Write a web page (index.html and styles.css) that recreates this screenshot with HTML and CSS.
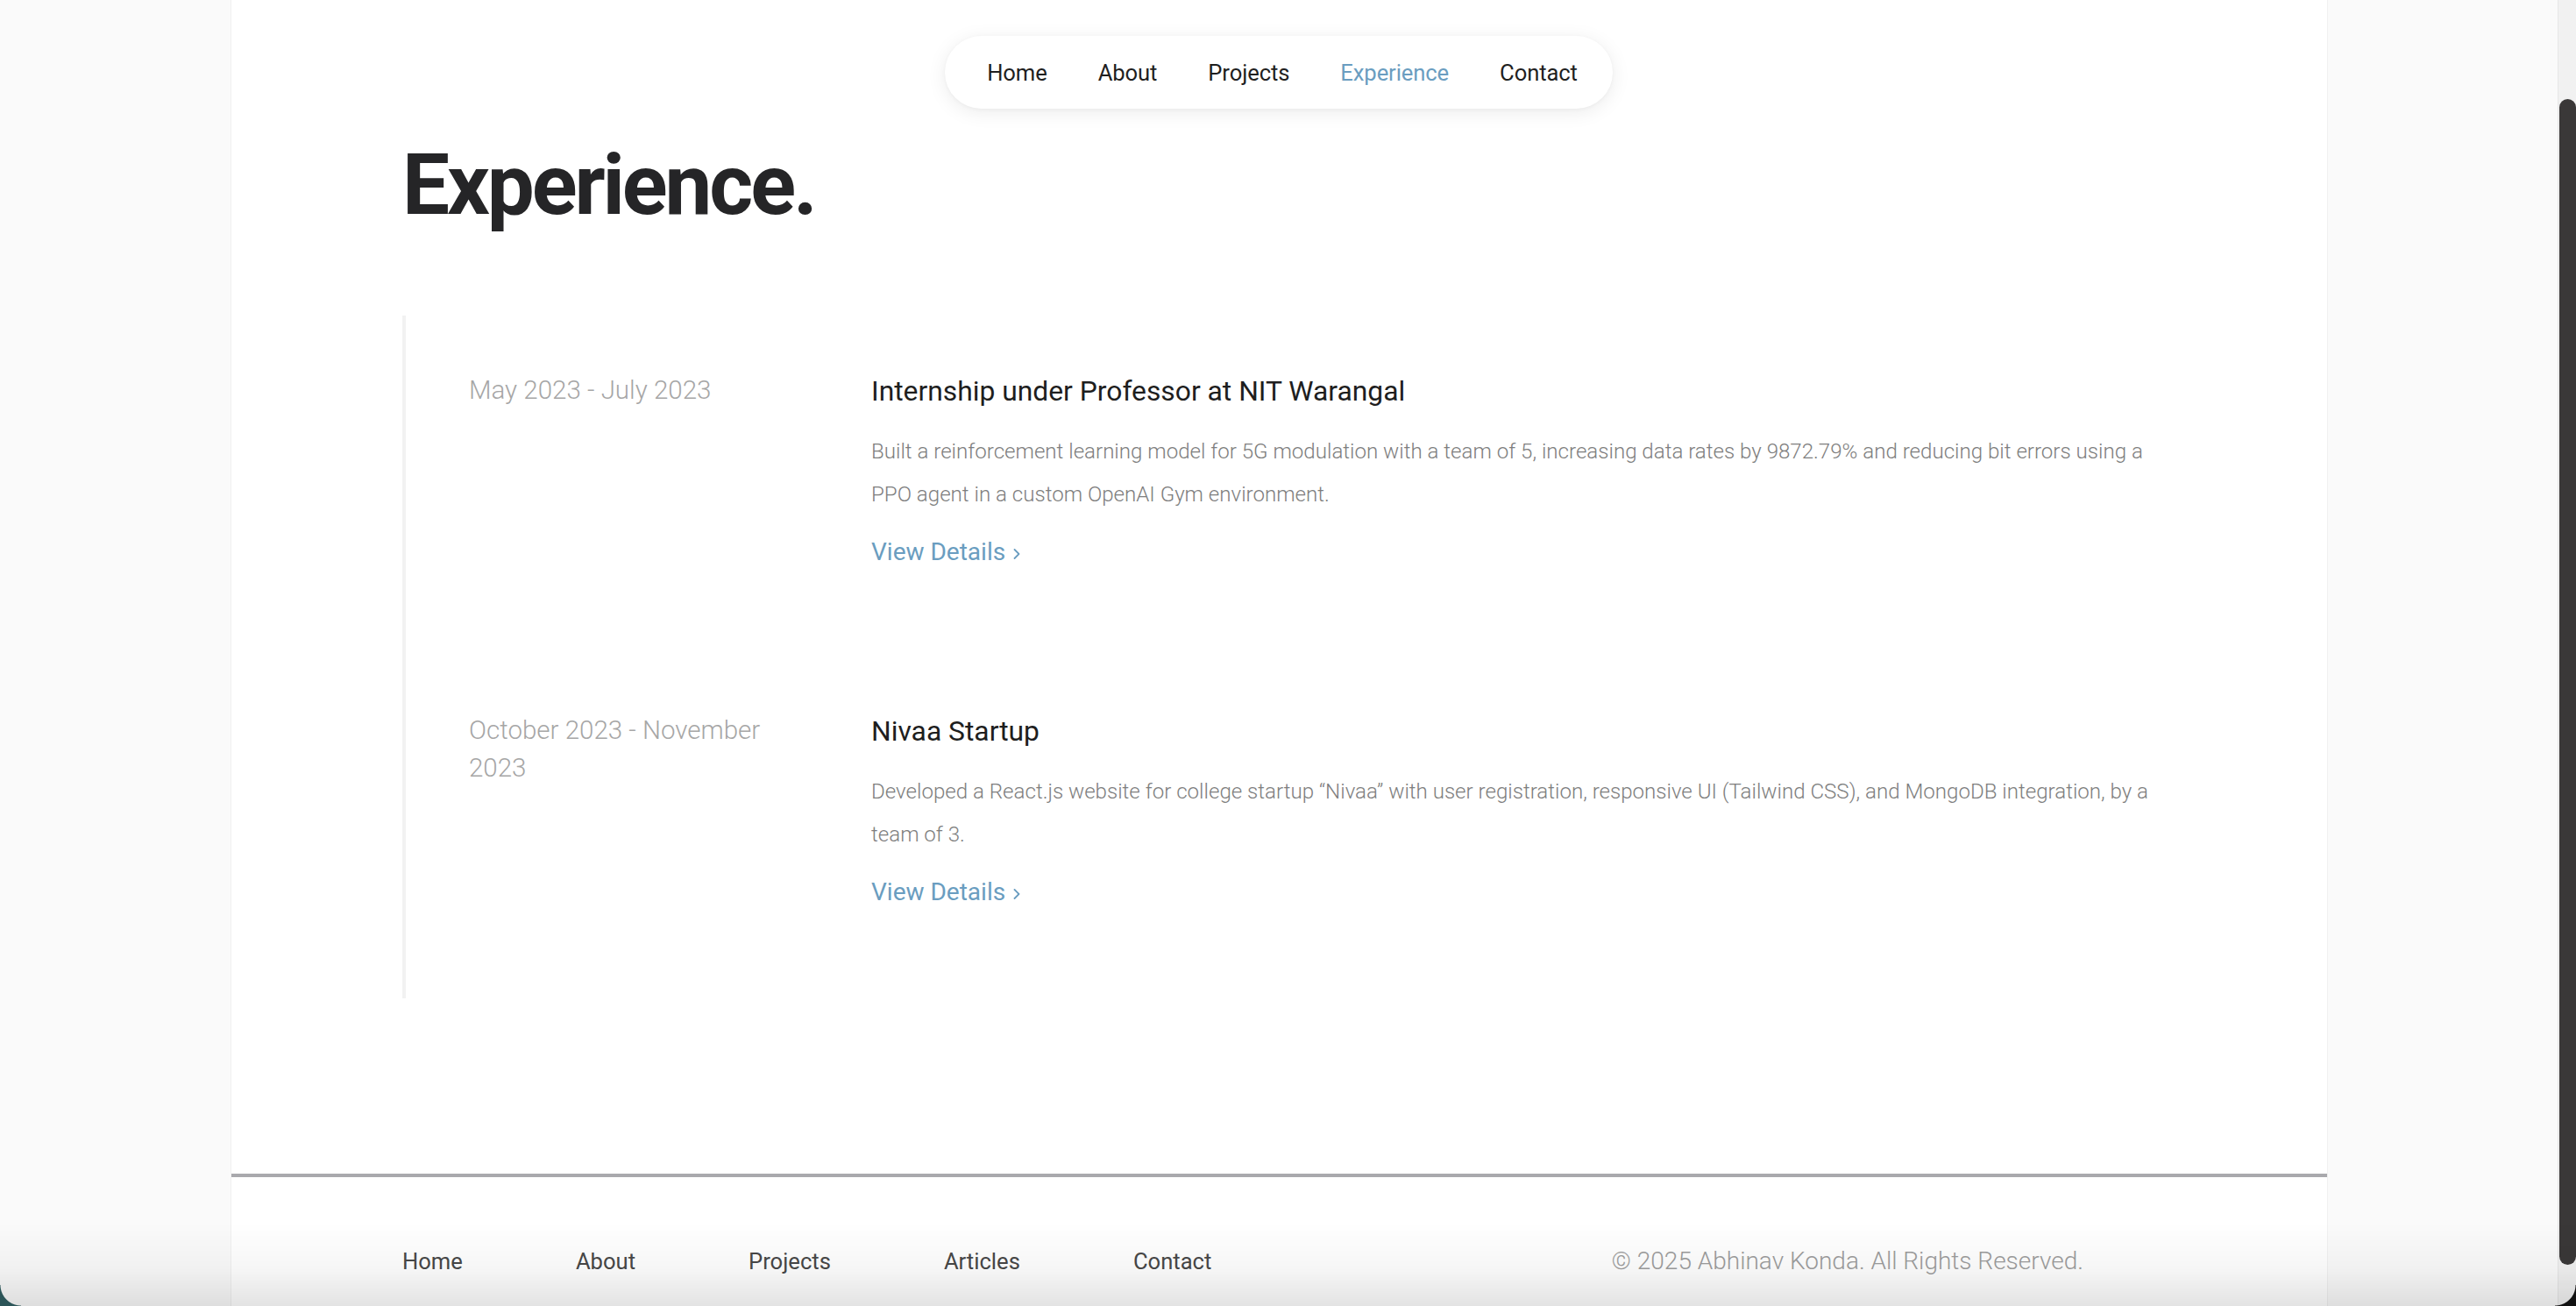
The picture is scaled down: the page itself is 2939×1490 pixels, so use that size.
FILE: index.html
```html
<!DOCTYPE html>
<html lang="en">
<head>
<meta charset="utf-8">
<title>Experience</title>
<link rel="stylesheet" href="styles.css">
</head>
<body>
<div class="viewport">
  <div class="page">
    <div class="card">
      <header class="nav-wrap">
        <nav class="nav">
          <a class="nav-link" href="#">Home</a>
          <a class="nav-link" href="#">About</a>
          <a class="nav-link" href="#">Projects</a>
          <a class="nav-link active" href="#">Experience</a>
          <a class="nav-link" href="#">Contact</a>
        </nav>
      </header>
      <main class="main">
        <h1 class="title">Experience.</h1>
        <section class="timeline">
          <article class="item">
            <div class="date">May 2023 - July 2023</div>
            <div class="body">
              <h2 class="role">Internship under Professor at NIT Warangal</h2>
              <p class="desc">Built a reinforcement learning model for 5G modulation with a team of 5, increasing data rates by 9872.79% and reducing bit errors using a PPO agent in a custom OpenAI Gym environment.</p>
              <a class="details" href="#">View Details <svg class="chev" viewBox="0 0 10 16" width="10" height="16"><path d="M2.5 3 L7.5 8 L2.5 13" fill="none" stroke="currentColor" stroke-width="1.8" stroke-linecap="round" stroke-linejoin="round"/></svg></a>
            </div>
          </article>
          <article class="item">
            <div class="date">October 2023 - November 2023</div>
            <div class="body">
              <h2 class="role">Nivaa Startup</h2>
              <p class="desc">Developed a React.js website for college startup “Nivaa” with user registration, responsive UI (Tailwind CSS), and MongoDB integration, by a team of 3.</p>
              <a class="details" href="#">View Details <svg class="chev" viewBox="0 0 10 16" width="10" height="16"><path d="M2.5 3 L7.5 8 L2.5 13" fill="none" stroke="currentColor" stroke-width="1.8" stroke-linecap="round" stroke-linejoin="round"/></svg></a>
            </div>
          </article>
        </section>
      </main>
      <footer class="footer">
        <div class="footer-inner">
          <nav class="footer-links">
            <a href="#">Home</a>
            <a href="#">About</a>
            <a href="#">Projects</a>
            <a href="#">Articles</a>
            <a href="#">Contact</a>
          </nav>
          <div class="copy">© 2025 Abhinav Konda. All Rights Reserved.</div>
        </div>
      </footer>
    </div>
  </div>
  <div class="scrollbar"><div class="thumb"></div></div>
</div>
<div class="shade"></div>
<div class="corner corner-left"></div>
<div class="corner corner-right"></div>
</body>
</html>
```
FILE: styles.css
```css
* { box-sizing: border-box; }
html, body {
  margin: 0;
  height: 100%;
  overflow: hidden;
}
body {
  background: #fafafa;
  font-family: Roboto, "Liberation Sans", Arial, sans-serif;
  color: #222;
}
a { text-decoration: none; color: inherit; }

.viewport {
  display: flex;
  height: 100%;
}
.page {
  flex: 1;
  height: 100%;
  overflow: hidden;
}
.card {
  width: 2393px;
  margin: 0 auto;
  min-height: 100%;
  background: #fff;
  border-left: 1px solid #f0f0f0;
  border-right: 1px solid #f0f0f0;
}

.nav-wrap {
  display: flex;
  justify-content: center;
  padding-top: 41px;
}
.nav {
  display: flex;
  align-items: center;
  height: 83px;
  padding: 0 11px 0 19px;
  background: #fff;
  border-radius: 42px;
  box-shadow: 0 4px 22px rgba(0, 0, 0, 0.08), 0 1px 4px rgba(0, 0, 0, 0.04);
}
.nav-link {
  font-size: 25.6px;
  padding: 0 29px;
  color: #1f1f1f;
  letter-spacing: -0.1px;
}
.nav-link.active { color: #6a9dc0; }

.main {
  width: 2000px;
  margin: 0 auto;
  padding-bottom: 200px;
}
.title {
  margin: 30px 0 0;
  font-size: 96px;
  font-weight: 700;
  line-height: 1.2;
  letter-spacing: -0.032em;
  color: #252527;
}

.timeline {
  margin-top: 91px;
  border-left: 4px solid #f2f2f2;
}
.item {
  display: grid;
  grid-template-columns: 379px 1fr;
  column-gap: 80px;
  padding: 62px 0 97px 72px;
}
.item:last-child { padding-bottom: 100px; }
.date {
  font-size: 29.5px;
  font-weight: 300;
  line-height: 43px;
  color: #a6a6a6;
  padding-top: 2px;
}
.role {
  margin: 0;
  font-size: 31.8px;
  font-weight: 400;
  line-height: 48px;
  color: #1e1e1e;
}
.desc {
  margin: 21px 0 0;
  font-size: 24.1px;
  font-weight: 300;
  line-height: 49px;
  color: #7e7e7e;
}
.details {
  display: inline-flex;
  align-items: center;
  gap: 8px;
  margin-top: 20px;
  font-size: 28px;
  line-height: 42px;
  color: #6a9dc0;
}
.chev { margin-top: 3px; }

.footer {
  border-top: 4px solid #a9a9ad;
}
.footer-inner {
  width: 2000px;
  margin: 0 auto;
  padding: 77px 82px 0 0;
  display: flex;
  justify-content: space-between;
  align-items: center;
}
.footer-links {
  display: flex;
  gap: 129px;
}
.footer-links a {
  font-size: 25.6px;
  line-height: 38px;
  color: #484848;
}
.copy {
  font-size: 28px;
  line-height: 38px;
  font-weight: 300;
  color: #9d9d9d;
}

.scrollbar {
  width: 21px;
  height: 100%;
  background: #f1f1f1;
  border-left: 1px solid #e6e6e6;
  padding: 113px 0 0 1px;
}
.thumb {
  width: 19px;
  height: 1330px;
  background: #3a3838;
  border-radius: 10px;
}

.shade {
  position: fixed;
  left: 0;
  right: 0;
  bottom: 0;
  height: 95px;
  background: linear-gradient(to bottom, rgba(0, 0, 0, 0), rgba(0, 0, 0, 0.035) 55%, rgba(0, 0, 0, 0.11));
  pointer-events: none;
}
.corner {
  position: fixed;
  bottom: 0;
  width: 24px;
  height: 24px;
  pointer-events: none;
}
.corner-left {
  left: 0;
  background: radial-gradient(circle at 100% 0, transparent 23px, #2c5558 24px);
}
.corner-right {
  right: 0;
  background: radial-gradient(circle at 0 0, transparent 23px, #111 24px);
}
```
